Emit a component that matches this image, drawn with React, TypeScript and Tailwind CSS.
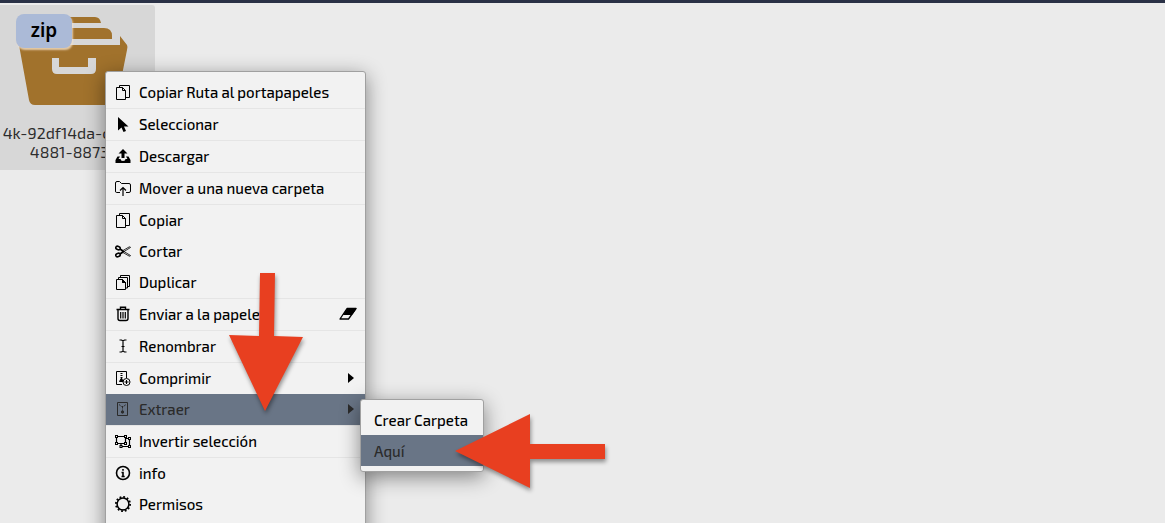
import { useState } from 'react';
import type { ReactNode } from 'react';
import clsx from 'clsx';

type Item = {
  id: string;
  label: string;
  icon: ReactNode;
  sep?: boolean; // línea divisoria debajo
  extra?: 'eraser' | 'submenu';
};

const ITEMS: Item[] = [
  { id: 'path', label: 'Copiar Ruta al portapapeles', icon: <CopyIcon />, sep: true },
  { id: 'select', label: 'Seleccionar', icon: <PointerIcon />, sep: true },
  { id: 'download', label: 'Descargar', icon: <DownloadIcon />, sep: true },
  { id: 'move', label: 'Mover a una nueva carpeta', icon: <FolderUpIcon />, sep: true },
  { id: 'copy', label: 'Copiar', icon: <CopyIcon /> },
  { id: 'cut', label: 'Cortar', icon: <CutIcon /> },
  { id: 'duplicate', label: 'Duplicar', icon: <DuplicateIcon />, sep: true },
  { id: 'trash', label: 'Enviar a la papelera', icon: <TrashIcon />, sep: true, extra: 'eraser' },
  { id: 'rename', label: 'Renombrar', icon: <RenameIcon />, sep: true },
  { id: 'zip', label: 'Comprimir', icon: <ZipIcon />, extra: 'submenu' },
  { id: 'extract', label: 'Extraer', icon: <ExtractIcon />, sep: true, extra: 'submenu' },
  { id: 'invert', label: 'Invertir selección', icon: <InvertIcon />, sep: true },
  { id: 'info', label: 'info', icon: <InfoIcon /> },
  { id: 'perms', label: 'Permisos', icon: <PermsIcon /> },
];

const PANEL =
  'absolute rounded-[3px] border border-[#a0a0a0] bg-[#f2f2f2] text-black shadow-[0_5px_20px_rgba(0,0,0,0.45)]';

export default function App() {
  const [active, setActive] = useState('extract');
  const [target, setTarget] = useState('Aquí');

  return (
    <main className="relative h-screen overflow-hidden border-t-[3px] border-[#2a3146] bg-[#ebebeb] pt-0.5 font-['Exo_2','Noto_Sans',sans-serif]">
      <FileCard />

      <div role="menu" className={clsx(PANEL, 'left-[105px] top-[68px] w-[261px] pt-[5px] pb-6')}>
        {ITEMS.map((it) => (
          <div key={it.id} className={clsx(it.sep && 'border-b border-[#e5e5e5]')}>
            <button
              role="menuitem"
              onClick={() => setActive(it.id)}
              className={clsx(
                'flex h-[31px] w-full items-center gap-2 pl-[9px] pr-2 text-left text-[15px] font-medium',
                it.id === active && 'bg-[#697586] text-[#2b2b2b]',
              )}
            >
              {it.icon}
              <span className="flex-1 whitespace-nowrap">{it.label}</span>
              {it.extra === 'eraser' && <EraserIcon />}
              {it.extra === 'submenu' && <Caret />}
            </button>
          </div>
        ))}
      </div>

      {active === 'extract' && (
        <div role="menu" className={clsx(PANEL, 'left-[360px] top-[396px] w-[124px] pt-1 pb-[5px]')}>
          {['Crear Carpeta', 'Aquí'].map((label) => (
            <button
              key={label}
              role="menuitem"
              onClick={() => setTarget(label)}
              className={clsx(
                'flex h-[31px] w-full items-center whitespace-nowrap pl-[13px] pt-0.5 text-left text-[15px] font-medium',
                label === target && 'bg-[#697586] text-[#2b2b2b]',
              )}
            >
              {label}
            </button>
          ))}
        </div>
      )}

      <Arrows />
    </main>
  );
}

function FileCard() {
  return (
    <div className="relative h-[165px] w-[155px] rounded-r-[3px] bg-[#d7d7d7] text-[#2d2d2d]">
      <svg viewBox="0 0 155 118" className="h-[118px] w-full" fill="#a1722c">
        <path d="M60 12H95Q100 12 101 18H60Z" />
        <path d="M60 23H104Q112 23 112 31V34H60Z" />
        <path
          fillRule="evenodd"
          d="M19 40H120V31L127 40Q128 42 127 45L117 95Q116 100 110 100H35Q30 100 29 95ZM52 53V64Q52 69 57 69H91Q96 69 96 64V53H88V62H59V53Z"
        />
      </svg>
      <span className="absolute left-4 top-[9px] flex h-[34px] w-14 items-center justify-center rounded-lg bg-[#abbad7] pb-0.5 font-['Noto_Sans',sans-serif] text-[19px] font-semibold text-black shadow-[1px_2px_2px_rgba(245,225,200,0.8)]">
        zip
      </span>
      <p className="text-center text-[16px] leading-[19px]">
        4k-92df14da-c0b1-4
        <br />
        4881-8873-a
      </p>
    </div>
  );
}

function Arrows() {
  return (
    <svg
      className="pointer-events-none absolute left-[220px] top-[262px] h-[240px] w-[400px] drop-shadow-[1px_3px_2px_rgba(0,0,0,0.4)]"
      viewBox="220 265 400 240"
      fill="#e83f20"
    >
      <path d="M260 273H275L274 336L303 337L265 411L229 335L259 336Z" />
      <path d="M455 451L530 414V444H605V459H530V488Z" />
    </svg>
  );
}

function Icon({ children }: { children: ReactNode }) {
  return (
    <svg
      viewBox="0 0 16 16"
      className="mb-0.5 size-4 shrink-0"
      fill="none"
      stroke="currentColor"
      strokeWidth="1"
      aria-hidden="true"
    >
      {children}
    </svg>
  );
}

function CopyIcon() {
  return (
    <Icon>
      <path d="M1.500 3.500H7.500L10.500 6.500V15.500H1.500Z" />
      <path d="M7.500 3.500V6.500H10.500M4.500 3.500V1.500H14.500V13.500H11" />
    </Icon>
  );
}

function PointerIcon() {
  return (
    <Icon>
      <path d="M3 1V14.500L6.500 11.500L8.500 16L11 15L9 10.500H13.500Z" fill="currentColor" stroke="none" />
    </Icon>
  );
}

function DownloadIcon() {
  return (
    <Icon>
      <path
        d="M8 1L12.500 5.500H9.500V10H6.500V5.500H3.500ZM.5 12L2.500 8.500H5L3.500 11H5.500Q5.500 13 8 13T10.500 11H12.500L11 8.500H13.500L15.500 12V15H.5Z"
        fill="currentColor"
        stroke="none"
      />
    </Icon>
  );
}

function FolderUpIcon() {
  return (
    <Icon>
      <path d="M5 12.500H1.500Q.5 12.500 .5 11V3Q.5 1.500 2 1.500H4.500L6.500 3.500H14Q15.500 3.500 15.500 5V11Q15.500 12.500 14 12.500H11" />
      <path d="M8 16V8M5 10.500L8 7.500L11 10.500" strokeWidth="1.200" />
    </Icon>
  );
}

function CutIcon() {
  return (
    <Icon>
      <ellipse cx="3" cy="5" rx="2.300" ry="1.700" transform="rotate(20 3 5)" strokeWidth="1.600" />
      <ellipse cx="3" cy="12" rx="2.300" ry="1.700" transform="rotate(-20 3 12)" strokeWidth="1.600" />
      <path d="M5 6L8 7.500L14 4Q15.500 3.500 15.500 4.500L9 8.500L15.500 12.500Q15.500 13.500 14 13L8 9.500L5 11" strokeWidth=".8" />
      <path d="M5 6L8.500 8.500L5 11" strokeWidth="1.600" />
    </Icon>
  );
}

function DuplicateIcon() {
  return (
    <Icon>
      <path d="M1.500 5.500H7.500L10.500 8.500V15.500H1.500Z" />
      <path d="M7.500 5.500V8.500H10.500M3.500 5V3.500H12.500V14H11M5.500 3V1.500H14.500V12.500H13" />
      <path d="M7.500 5.500L10.500 8.500H7.500Z" fill="currentColor" />
    </Icon>
  );
}

function TrashIcon() {
  return (
    <Icon>
      <path d="M1.500 3.500H14.500M5.500 3V1.200H10.500V3M3 4V12.500Q3 14.500 5 14.500H11Q13 14.500 13 12.500V4" strokeWidth="1.400" />
      <path d="M5.700 6V12.500M8 6V12.500M10.300 6V12.500" strokeWidth="1.200" />
    </Icon>
  );
}

function RenameIcon() {
  return (
    <Icon>
      <path d="M4.500 2H6.500L8 3L9.500 2H11.500M4.500 14H6.500L8 13L9.500 14H11.500M8 2.500V13.500" strokeWidth="1.200" />
      <path d="M6.500 8.500H9.500" />
    </Icon>
  );
}

function ZipIcon() {
  return (
    <Icon>
      <path d="M7 14.500H1.500V1.500H11.500V8" />
      <path d="M6.500 3V8" strokeDasharray="1 1" strokeWidth="2" />
      <path d="M6.500 8L4.500 11.500H8Z" fill="currentColor" />
      <circle cx="11.500" cy="12" r="3.500" />
      <path d="M11.500 10V14M9.500 12H13.500" />
    </Icon>
  );
}

function ExtractIcon() {
  return (
    <Icon>
      <path d="M2.500 1.500H12.500V14.500H2.500Z" />
      <path d="M4 3.500L6.500 5.500H8.500L11 3.500M7.500 5.500V9.500" strokeDasharray="2 1" />
      <circle cx="7.500" cy="11" r="1.200" fill="currentColor" />
    </Icon>
  );
}

function InvertIcon() {
  return (
    <Icon>
      <path d="M1.500 3.500H10.500V10.500H1.500ZM11 5.500H14.500V13.500H6V11" strokeWidth="1.200" />
      <path
        d="M0 2H3V5H0ZM9 2H12V5H9ZM0 9H3V12H0ZM9 9H12V12H9ZM13 4H16V7H13ZM13 12H16V15H13ZM4.500 12H7.500V15H4.500Z"
        fill="currentColor"
        stroke="none"
      />
      <path d="M1 3.500H2M10 3.500H11M1 10.500H2M10 10.500H11M14 5.500H15M14 13.500H15M5.500 13.500H6.500" stroke="#f2f2f2" />
    </Icon>
  );
}

function InfoIcon() {
  return (
    <Icon>
      <circle cx="8" cy="8" r="6.500" strokeWidth="1.600" />
      <path d="M8 4V5.700M6.500 7.500H8V11.500M6.500 11.500H9.700" strokeWidth="1.600" />
    </Icon>
  );
}

function PermsIcon() {
  return (
    <Icon>
      <circle cx="8" cy="8" r="5.900" strokeWidth="1.500" />
      <circle cx="8" cy="8" r="7.100" strokeWidth="1.800" strokeDasharray="1.800 1.917" />
    </Icon>
  );
}

function EraserIcon() {
  return (
    <svg viewBox="0 0 18 14" className="mb-0.5 h-3.5 w-[18px]" stroke="currentColor" aria-hidden="true">
      <path d="M1 12L8 1.500H17L9.500 12Z" fill="none" strokeWidth="1.300" strokeLinejoin="round" />
      <path d="M4.500 7.500L8.500 1.500H17L13 7.500Z" fill="currentColor" />
    </svg>
  );
}

function Caret() {
  return (
    <svg viewBox="0 0 6 10" className="mr-[3px] mb-0.5 h-2.5 w-1.5" fill="currentColor" aria-hidden="true">
      <path d="M0 0L6 5L0 10Z" />
    </svg>
  );
}
